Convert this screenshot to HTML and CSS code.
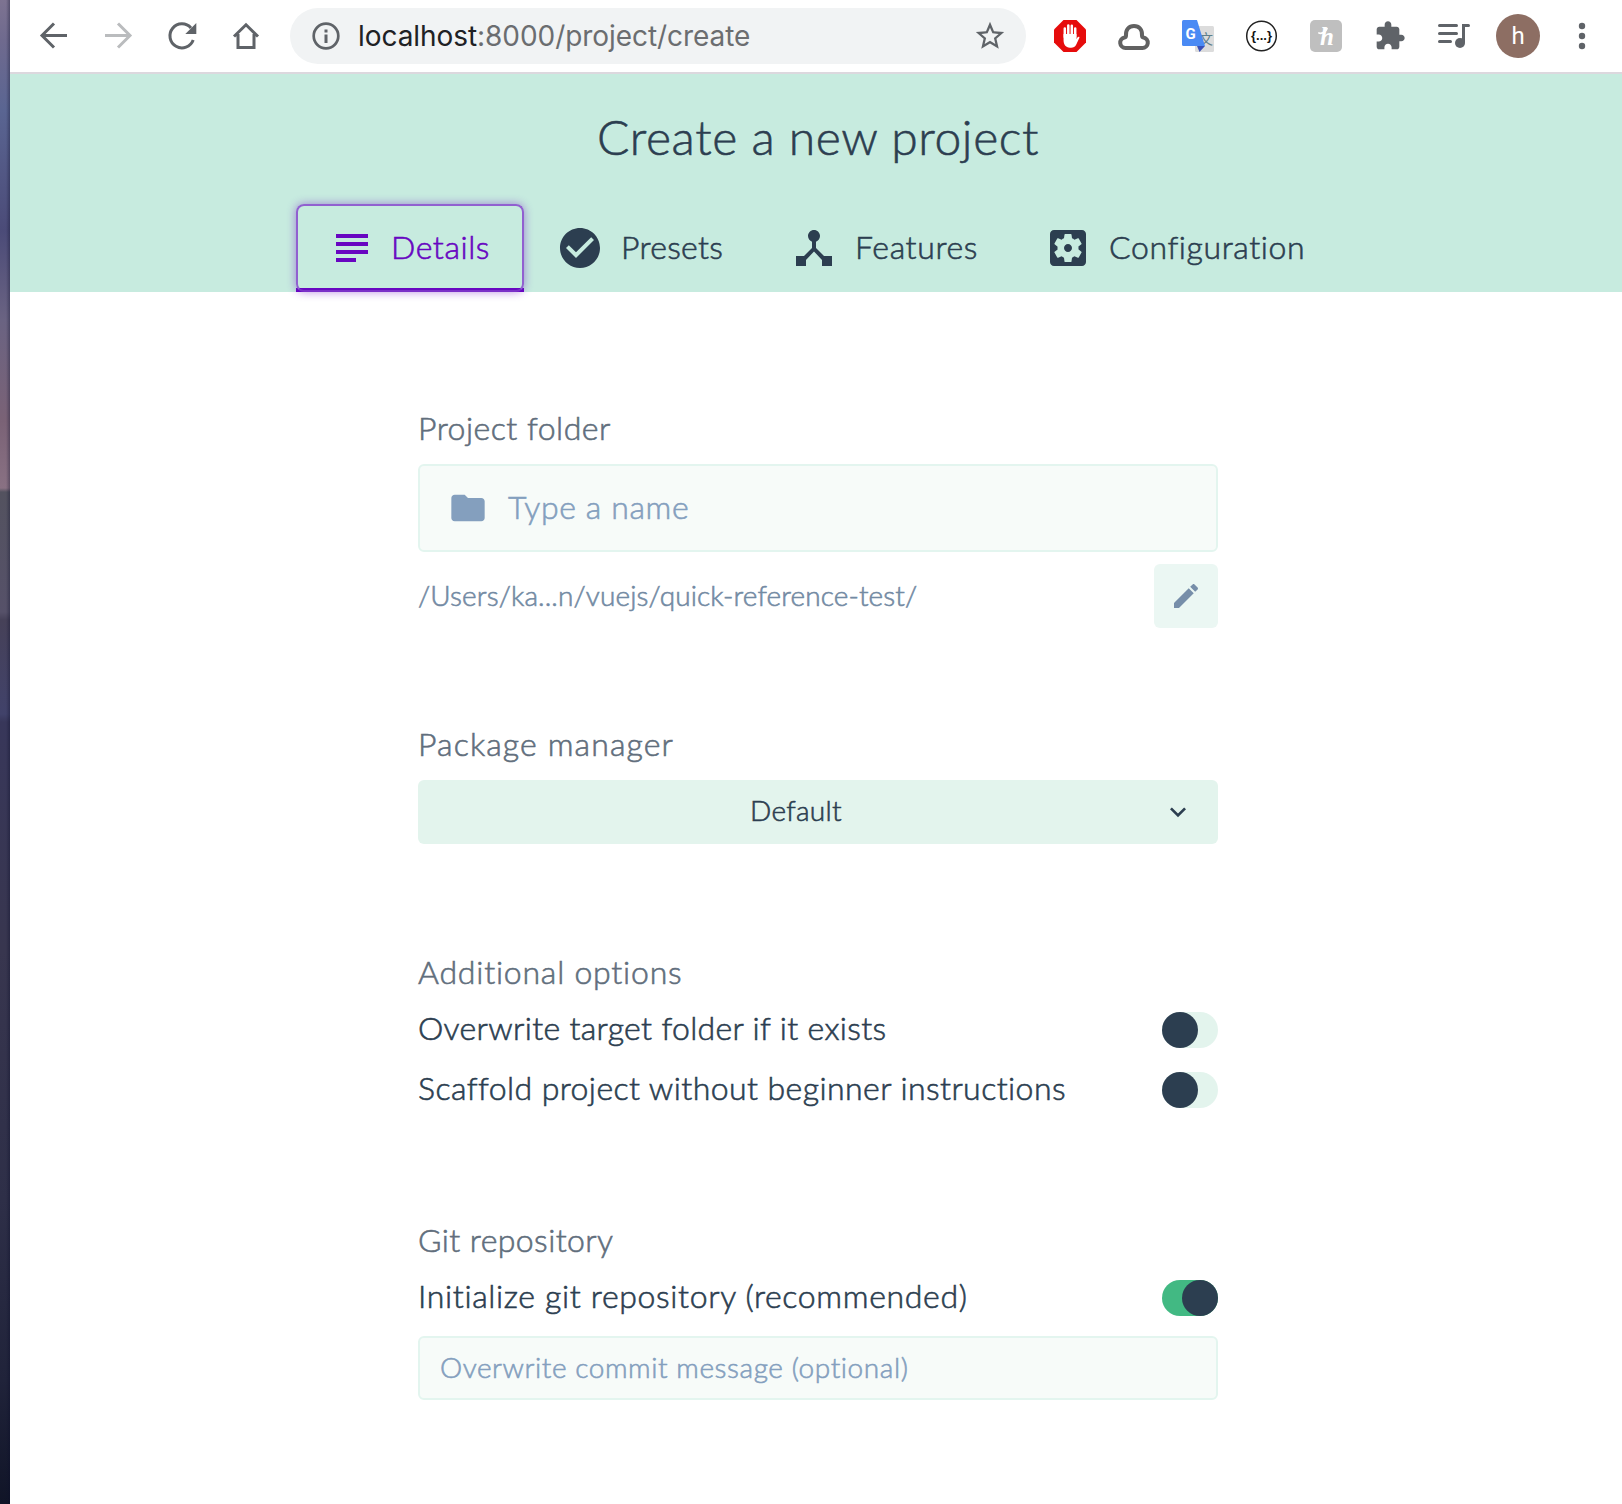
FILE: index.html
```html
<!DOCTYPE html>
<html lang="en">
<head>
<meta charset="utf-8">
<title>Create a new project</title>
<link rel="stylesheet" href="styles.css">
</head>
<body>
<div class="desktop"></div>
<div class="window">
  <div class="toolbar">
    <nav class="nav">
      <svg viewBox="0 0 32 32" class="line"><path d="M29 15.5H5M16 3.5L4 15.500L16 27.500"/></svg>
      <svg viewBox="0 0 32 32" class="line faded"><path d="M3 15.500H27M16 3.500L28 15.500L16 27.500"/></svg>
      <svg viewBox="0 0 32 32"><path class="line" d="M27.200 20A12 12 0 1 1 25 8"/><path d="M30.300 3V14H19.300Z"/></svg>
      <svg viewBox="0 0 32 32" class="line"><path d="M8 14V27.500H24V14M4 16.500L16 4.800L28 16.500"/></svg>
    </nav>
    <div class="address">
      <svg class="info" viewBox="0 0 28 28"><circle cx="14" cy="14" r="12.300" fill="none" stroke="currentColor" stroke-width="2.700"/><path d="M12.500 7.500h3v3h-3zM12.500 12.500h3v8.500h-3z"/></svg>
      <span class="url"><b>localhost</b>:8000/project/create</span>
      <svg class="star" viewBox="0 0 24 24"><path d="M22 9.240l-7.190-.62L12 2 9.190 8.630 2 9.240l5.460 4.730L5.820 21 12 17.270 18.180 21l-1.630-7.030L22 9.240zM12 15.400l-3.760 2.270 1-4.280-3.320-2.880 4.380-.38L12 6.100l1.710 4.040 4.380.38-3.320 2.880 1 4.280L12 15.400z"/></svg>
    </div>
    <div class="extensions">
      <svg viewBox="0 0 32 32"><path fill="#e60c0c" d="M9.500 0h13L32 9.500v13L22.500 32h-13L0 22.500v-13z"/><g stroke="#fff" stroke-linecap="round" fill="none" stroke-width="2.500"><path d="M10.800 17V8.500M14.300 16V5.500M17.800 16V5.700M21.200 17V8.500"/></g><path fill="#fff" d="M9.550 14H22.450V19L23.400 17.500C24 16.300 26 16.300 25.300 18L22.400 24.300C21 27.500 18.500 28 16 27.700C11.500 27.500 9.550 24.500 9.550 20Z"/></svg>
      <svg viewBox="0 0 32 32"><path fill="none" stroke="#616161" stroke-width="4" stroke-linejoin="round" d="M8 28H24.500A5.300 5.300 0 0 0 25.500 17.500C24.500 17.300 24 16.500 24 15.500C24.500 9.500 21 6 16 6S7.500 9.500 8 15.500C8 16.500 7.500 17.300 6.500 17.500A5.300 5.300 0 0 0 7.500 28Z"/></svg>
      <svg viewBox="0 0 32 32"><rect x="13" y="6" width="19" height="26" rx="1.500" fill="#dcdcdc"/><text x="17" y="24" class="cjk">文</text><path fill="#3a50b8" d="M15 26H23L17.500 32Z"/><path fill="#4a8af4" d="M1.500 0H15L23 26H1.500Q0 26 0 24.500V1.500Q0 0 1.500 0Z"/><text x="3.400" y="18.600" class="gee">G</text></svg>
      <svg viewBox="0 0 32 32"><circle cx="15.500" cy="16" r="14.800" fill="#fff" stroke="#222" stroke-width="1.500"/><text x="15.500" y="20" text-anchor="middle" class="braces">{...}</text></svg>
      <svg viewBox="0 0 32 32"><rect width="32" height="32" rx="5" fill="#bfbfbf"/><path d="M9 13C11 14 16 12 17 8.500" fill="none" stroke="#fff" stroke-width="1.800" stroke-linecap="round"/><text x="17" y="25" text-anchor="middle" class="honey">h</text></svg>
      <svg viewBox="0 0 24 24"><path d="M20.500 11H19V7c0-1.100-.9-2-2-2h-4V3.500C13 2.120 11.880 1 10.500 1S8 2.120 8 3.500V5H4c-1.100 0-1.990.9-1.990 2v3.800H3.500c1.490 0 2.700 1.210 2.700 2.700s-1.210 2.700-2.700 2.700H2V20c0 1.100.9 2 2 2h3.800v-1.500c0-1.490 1.210-2.700 2.700-2.700 1.490 0 2.700 1.210 2.700 2.700V22H17c1.100 0 2-.9 2-2v-4h1.500c1.380 0 2.500-1.120 2.500-2.500S21.880 11 20.500 11z"/></svg>
      <svg viewBox="0 0 32 32" class="playlist"><path class="line" d="M1.500 5.500H18.500M1.500 13.500H18.500M1.500 21.500H12.500M25.500 22V5.500H30.500"/><circle cx="22" cy="23" r="5"/></svg>
    </div>
    <div class="avatar">h</div>
    <svg class="dots" viewBox="0 0 8 32"><circle cx="4" cy="6" r="3.200"/><circle cx="4" cy="16" r="3.200"/><circle cx="4" cy="26" r="3.200"/></svg>
  </div>

  <header class="header">
    <h1>Create a new project</h1>
    <div class="tabs">
      <a class="tab details active"><svg viewBox="0 0 24 24"><path d="M14 17H4v2h10v-2zm6-8H4v2h16V9zM4 15h16v-2H4v2zM4 5v2h16V5H4z"/></svg><span>Details</span></a>
      <a class="tab presets"><svg viewBox="0 0 24 24"><path d="M12 2C6.480 2 2 6.480 2 12s4.480 10 10 10 10-4.480 10-10S17.520 2 12 2zm-2 15l-5-5 1.410-1.410L10 14.170l7.590-7.590L19 8l-9 9z"/></svg><span>Presets</span></a>
      <a class="tab features"><svg viewBox="0 0 24 24"><path d="M17 16l-4-4V8.820C14.160 8.400 15 7.300 15 6c0-1.660-1.340-3-3-3S9 4.340 9 6c0 1.300.84 2.400 2 2.820V12l-4 4H3v5h5v-3.050l4-4.200 4 4.200V21h5v-5h-4z"/></svg><span>Features</span></a>
      <a class="tab configuration"><svg viewBox="0 0 24 24"><path d="M12 10c-1.100 0-2 .9-2 2s.9 2 2 2 2-.9 2-2-.9-2-2-2zm7-7H5c-1.110 0-2 .9-2 2v14c0 1.100.89 2 2 2h14c1.110 0 2-.9 2-2V5c0-1.100-.89-2-2-2zm-1.750 9c0 .23-.02.46-.05.68l1.480 1.160c.13.11.17.3.08.45l-1.400 2.420c-.09.15-.27.21-.43.15l-1.740-.7c-.36.28-.76.51-1.180.69l-.26 1.850c-.03.17-.18.3-.35.3h-2.800c-.17 0-.32-.13-.35-.29l-.26-1.850c-.43-.18-.82-.41-1.180-.69l-1.740.7c-.16.06-.34 0-.43-.15l-1.400-2.420c-.09-.15-.05-.34.08-.45l1.480-1.160c-.03-.23-.05-.46-.05-.69 0-.23.02-.46.05-.68l-1.480-1.160c-.13-.11-.17-.3-.08-.45l1.400-2.420c.09-.15.27-.21.43-.15l1.740.7c.36-.28.76-.51 1.180-.69l.26-1.850c.03-.17.18-.3.35-.3h2.800c.17 0 .32.13.35.29l.26 1.850c.43.18.82.41 1.180.69l1.740-.7c.16-.06.34 0 .43.15l1.400 2.420c.09.15.05.34-.08.45l-1.480 1.160c.03.23.05.46.05.69z"/></svg><span>Configuration</span></a>
    </div>
  </header>

  <main class="form">
    <section class="group">
      <h2 class="folder-label">Project folder</h2>
      <div class="input large"><svg viewBox="0 0 24 24"><path d="M10 4H4c-1.100 0-1.990.9-1.990 2L2 18c0 1.100.9 2 2 2h16c1.100 0 2-.9 2-2V8c0-1.100-.9-2-2-2h-8l-2-2z"/></svg><span>Type a name</span></div>
      <div class="path"><span>/Users/ka...n/vuejs/quick-reference-test/</span><button class="edit"><svg viewBox="0 0 24 24"><path d="M3 17.250V21h3.750L17.810 9.940l-3.750-3.750L3 17.250zM20.710 7.040c.39-.39.39-1.020 0-1.410l-2.340-2.340c-.39-.39-1.020-.39-1.410 0l-1.830 1.830 3.750 3.750 1.830-1.830z"/></svg></button></div>
    </section>
    <section class="group">
      <h2 class="package-label">Package manager</h2>
      <div class="select"><span>Default</span><svg viewBox="0 0 24 24"><path d="M16.590 8.590L12 13.170 7.410 8.590 6 10l6 6 6-6z"/></svg></div>
    </section>
    <section class="group options">
      <h2 class="options-label">Additional options</h2>
      <div class="row overwrite"><span>Overwrite target folder if it exists</span><i class="switch"></i></div>
      <div class="row scaffold"><span>Scaffold project without beginner instructions</span><i class="switch"></i></div>
    </section>
    <section class="group git">
      <h2>Git repository</h2>
      <div class="row initialize"><span>Initialize git repository (recommended)</span><i class="switch on"></i></div>
      <div class="input small"><span>Overwrite commit message (optional)</span></div>
    </section>
  </main>
</div>
</body>
</html>
```
FILE: styles.css
```css
* { box-sizing: border-box; }
body {
  margin: 0;
  height: 1504px;
  display: flex;
  overflow: hidden;
  background: #fff;
  color: #2c3e50;
  font-family: Lato, "Open Sans", sans-serif;
  font-weight: 300;
  font-size: 32px;
  line-height: 40px;
  white-space: nowrap;
}
svg { display: block; flex: none; fill: currentColor; }
h1, h2 { margin: 0; font-weight: 300; }
h1, h2, .tab span, .form span { -webkit-text-stroke: .6px currentColor; }

.desktop {
  width: 10px;
  flex: none;
  background:
    linear-gradient(90deg, transparent 60%, rgba(10, 12, 40, .35)),
    linear-gradient(#7d7391 0, #6f6a8e 40px, #5a6592 110px, #4b4b78 230px, #6a6382 320px, #7a6276 420px, #897183 488px, #53525f 492px, #565169 612px, #464158 620px, #41426a 714px, #38375a 722px, #38364f 950px, #2e2f48 1200px, #20233a 1380px, #101427 1504px);
}
.window { flex: 1; min-width: 0; }

.toolbar {
  height: 74px;
  padding: 0 36px 0 28px;
  display: flex;
  align-items: center;
  border-bottom: 2px solid #dcd8de;
  color: #5f6368;
}
.line { fill: none; stroke: currentColor; stroke-width: 3; stroke-linecap: round; }
.nav, .extensions { display: flex; gap: 32px; }
.nav svg, .extensions svg { width: 32px; height: 32px; }
.nav .line { stroke-linecap: butt; }
.faded { color: #babcbe; }
.address {
  width: 736px;
  height: 56px;
  flex: none;
  margin: 0 28px;
  padding: 0 19px 0 22px;
  display: flex;
  align-items: center;
  border-radius: 28px;
  background: #f1f3f4;
}
.info { width: 28px; height: 28px; margin-right: 18px; }
.url { flex: 1; font: 400 28px/40px Inter, sans-serif; letter-spacing: -.06px; color: #6b6d70; }
.url b { font-weight: 400; color: #202124; }
.star { width: 34px; height: 34px; }
.extensions svg { overflow: visible; }
.cjk { font: 400 14px "Noto Sans CJK SC", sans-serif; fill: #5f7f8c; }
.gee { font: 700 15px Roboto, sans-serif; fill: #fff; }
.braces { font: 700 13px "Liberation Sans", sans-serif; fill: #111; }
.honey { font: italic 700 25px "Liberation Serif", serif; fill: #fff; }
.avatar {
  width: 44px;
  height: 44px;
  flex: none;
  margin: 0 38px 0 26px;
  border-radius: 50%;
  background: #8d6e63;
  color: #fff;
  font: 400 24px/44px Roboto, sans-serif;
  text-align: center;
}
.dots { width: 8px; height: 32px; }

.header {
  height: 218px;
  padding-top: 33px;
  background: #c7ebdf;
}
.header h1 {
  width: 1616px;
  font-size: 48px;
  line-height: 60px;
  letter-spacing: .59px;
  text-align: center;
}
.tabs { width: 1616px; display: flex; justify-content: center; padding-top: 37px; }
.tab {
  height: 88px;
  padding: 0 30px 0 32px;
  display: flex;
  align-items: center;
  gap: 17px;
}
.tab svg { width: 48px; height: 48px; }
.tab span { padding-bottom: 3px; }
.details { width: 228px; gap: 15px; letter-spacing: .57px; }
.presets { width: 234px; letter-spacing: .31px; }
.features { width: 254px; letter-spacing: .63px; }
.configuration { width: 328px; letter-spacing: .6px; }
.active { position: relative; color: #6806c1; box-shadow: inset 0 -4px #6806c1; }
.active::after {
  content: "";
  position: absolute;
  inset: 0;
  border: 2px solid #9160d0;
  border-bottom-color: #7a2fc8;
  border-radius: 8px;
  box-shadow: 0 0 10px rgba(104, 6, 193, .45);
}

.form { width: 800px; margin: 116px 0 0 408px; }
.group { margin-bottom: 96px; }
h2 { font-size: 32px; line-height: 40px; color: #616e7c; letter-spacing: .43px; }
.folder-label, .package-label { margin-bottom: 16px; }
.folder-label { letter-spacing: .5px; }
.package-label { letter-spacing: 1.12px; }
.options-label { letter-spacing: .79px; }
.options { margin-top: 108px; margin-bottom: 100px; }
.options h2, .git h2 { margin-bottom: 8px; }
.input {
  display: flex;
  align-items: center;
  border: 2px solid #e3f5ef;
  border-radius: 6px;
  background: #f7fbf9;
  color: #849fbe;
}
.large { height: 88px; padding-left: 28px; gap: 20px; letter-spacing: .62px; }
.large svg { width: 40px; height: 40px; }
.large span { padding-bottom: 3px; }
.small { height: 64px; margin-top: 8px; padding-left: 20px; font-size: 28px; letter-spacing: .57px; }
.small span { padding-bottom: 2px; }
.path {
  display: flex;
  align-items: center;
  justify-content: space-between;
  margin-top: 12px;
  font-size: 28px;
  letter-spacing: .12px;
  color: #738aa3;
}
.path span { padding-bottom: 3px; }
.edit {
  width: 64px;
  height: 64px;
  padding: 16px;
  border: 0;
  border-radius: 6px;
  background: #ebf7f3;
  color: #768ea9;
}
.edit svg { width: 32px; height: 32px; }
.select {
  height: 64px;
  padding: 0 24px 0 12px;
  display: flex;
  align-items: center;
  border-radius: 6px;
  background: #e3f4ed;
  font-size: 28px;
  letter-spacing: .31px;
}
.select span { flex: 1; text-align: center; padding-bottom: 5px; }
.select svg { width: 32px; height: 32px; margin-top: -1px; }
.row { height: 60px; display: flex; align-items: center; justify-content: space-between; }
.row span { padding-bottom: 4px; }
.overwrite { letter-spacing: .34px; }
.scaffold { letter-spacing: .43px; }
.initialize { letter-spacing: .66px; }
.switch {
  width: 56px;
  height: 36px;
  display: flex;
  border-radius: 18px;
  background: #e3f4ed;
}
.switch::before { content: ""; width: 36px; height: 36px; border-radius: 50%; background: #2c3e50; }
.switch.on { justify-content: flex-end; background: #42b983; }
```
